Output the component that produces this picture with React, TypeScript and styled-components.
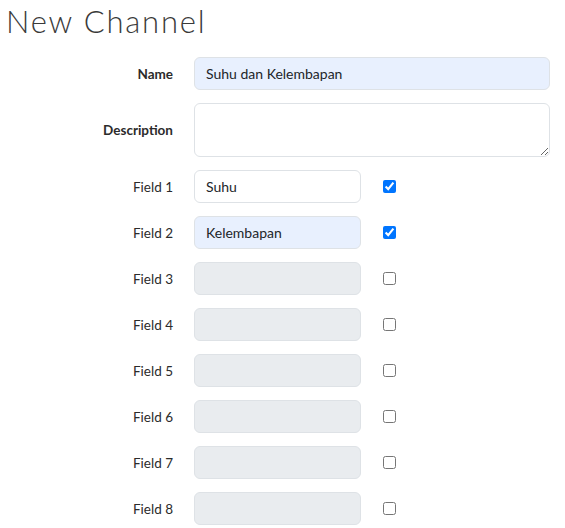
import React from "react";
import styled, { createGlobalStyle } from "styled-components";

const GlobalStyle = createGlobalStyle`
    body {
        margin: 0;
        background-color: #ffffff;
        font-family: Lato, "Liberation Sans", sans-serif;
        color: #212529;
    }
`;

const Page = styled.div`
    padding: 0 6px;
`;

const Title = styled.h1`
    margin: 0;
    padding-top: 2px;
    font-family: Lato, "Open Sans", sans-serif;
    font-weight: 300;
    font-size: 31px;
    line-height: 38px;
    color: #3a3a3a;
    letter-spacing: 1.8px;
`;

const Form = styled.form`
    display: flex;
    flex-direction: column;
    gap: 13px;
    padding-top: 17px;
`;

const Row = styled.div`
    display: flex;
    align-items: center;
`;

const Label = styled.label<{ $bold?: boolean }>`
    width: 167px;
    margin-right: 21px;
    text-align: right;
    font-size: 13.5px;
    font-weight: ${(p) => (p.$bold ? 700 : 400)};
    color: #2b2b2b;
`;

const TextInput = styled.input<{ $wide?: boolean; $filled?: boolean }>`
    box-sizing: border-box;
    width: ${(p) => (p.$wide ? "356px" : "167px")};
    height: 33px;
    padding: 0 11px;
    border: 1px solid #dee2e6;
    border-radius: 6px;
    font-family: Lato, "Liberation Sans", sans-serif;
    font-size: 14px;
    color: #212529;
    background-color: ${(p) => (p.$filled ? "#e8f0fe" : "#ffffff")};
    outline: none;

    &:disabled {
        background-color: #e9ecef;
    }
`;

const TextArea = styled.textarea`
    box-sizing: border-box;
    width: 356px;
    height: 54px;
    padding: 6px 11px;
    border: 1px solid #dee2e6;
    border-radius: 6px;
    font-family: Lato, "Liberation Sans", sans-serif;
    font-size: 14px;
    outline: none;
`;

const Check = styled.input`
    width: 13px;
    height: 13px;
    margin: 0 0 0 22px;
`;

const fields = [
    { name: "Suhu", on: true, filled: false },
    { name: "Kelembapan", on: true, filled: true },
    { name: "", on: false },
    { name: "", on: false },
    { name: "", on: false },
    { name: "", on: false },
    { name: "", on: false },
    { name: "", on: false },
];

export default function App() {
    return (
        <Page>
            <GlobalStyle />
            <Title>New Channel</Title>
            <Form>
                <Row>
                    <Label $bold>Name</Label>
                    <TextInput $wide $filled defaultValue="Suhu dan Kelembapan" />
                </Row>
                <Row>
                    <Label $bold>Description</Label>
                    <TextArea />
                </Row>
                {fields.map((f, i) => (
                    <Row key={i}>
                        <Label>Field {i + 1}</Label>
                        <TextInput
                            defaultValue={f.name}
                            $filled={f.filled}
                            disabled={!f.on}
                        />
                        <Check type="checkbox" defaultChecked={f.on} />
                    </Row>
                ))}
            </Form>
        </Page>
    );
}
